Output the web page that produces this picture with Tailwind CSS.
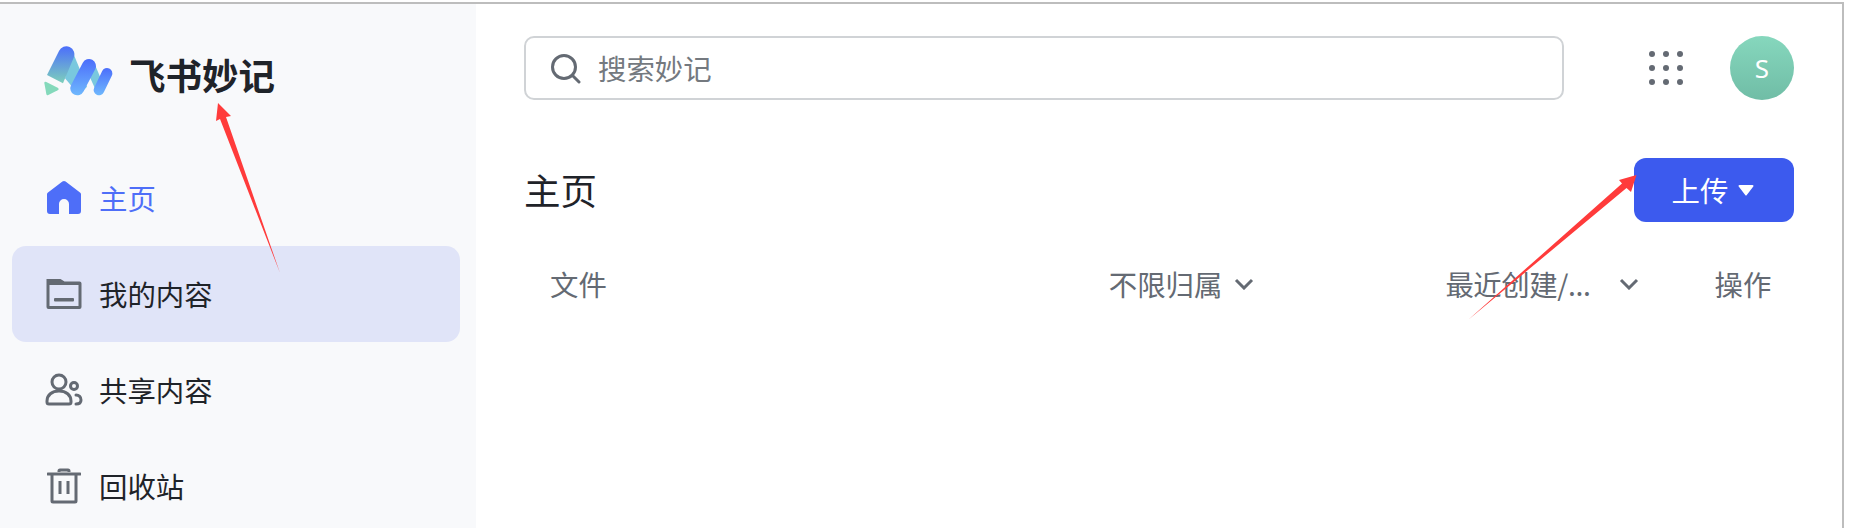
<!DOCTYPE html>
<html lang="zh-CN">
<head>
  <meta charset="UTF-8">
  <title>飞书妙记</title>
  <script src="https://cdn.jsdelivr.net/npm/@tailwindcss/browser@4"></script>
</head>
<body class="bg-white h-[528px] overflow-hidden font-['Noto_Sans_CJK_SC','Noto_Sans',sans-serif]">
  <div class="relative h-[528px] pt-[2px] pr-[11px]">
    <div class="flex h-[526px] border-t-2 border-r-2 border-[#bdbdbd] overflow-hidden">

      <!-- Sidebar -->
      <aside class="w-[476px] shrink-0 bg-[#f8f9fb] pl-3 pr-4">
        <div class="flex items-center h-[146px] pl-[31px]">
          <svg class="w-[74px] h-[54px] mt-[-11px]" viewBox="40 40 222 162" fill="none">
            <defs>
              <linearGradient id="lg1" gradientUnits="userSpaceOnUse" x1="0" y1="45" x2="0" y2="158"><stop offset="0" stop-color="#4c6ffb"/><stop offset="1" stop-color="#7fd3b9"/></linearGradient>
              <linearGradient id="lg2" gradientUnits="userSpaceOnUse" x1="0" y1="85" x2="0" y2="192"><stop offset="0" stop-color="#4c6ffb"/><stop offset="1" stop-color="#6fb9fd"/></linearGradient>
              <linearGradient id="lg3" gradientUnits="userSpaceOnUse" x1="0" y1="110" x2="0" y2="192"><stop offset="0" stop-color="#4c6ffb"/><stop offset="1" stop-color="#6fb9fd"/></linearGradient>
            </defs>
            <path d="M128 58L172 165L148 190L106 140Z" fill="#79c8de"/>
            <path d="M192 90L226 170L205 190L180 135Z" fill="#79c8de"/>
            <path d="M88 58A24 24 0 0 1 132 78L100 155L52 130Z" fill="url(#lg1)"/>
            <line x1="178" y1="103" x2="143" y2="170" stroke="url(#lg2)" stroke-width="42" stroke-linecap="round"/>
            <line x1="232" y1="125" x2="208" y2="175" stroke="url(#lg3)" stroke-width="32" stroke-linecap="round"/>
            <path d="M44 154Q44 149 50 151L84 168Q90 172 84 176L56 190Q51 192 50 187Z" fill="#84d9bb"/>
          </svg>
          <span class="ml-[12px] text-[36.5px] leading-[44px] font-bold text-[#1f2329] mt-[-4px]">飞书妙记</span>
        </div>
        <nav class="flex flex-col">
          <a class="flex items-center h-[96px] pl-[34px] text-[#4e6ef8]">
            <svg class="w-9 h-9 mr-[17px]" viewBox="0 0 36 36" fill="#4e6ef8">
              <path d="M16.4 1.6a2.5 2.5 0 0 1 3.2 0L34 12.6a2 2 0 0 1 1 1.8V31a3 3 0 0 1-3 3h-9V24a5 5 0 0 0-10 0v10H4a3 3 0 0 1-3-3V14.4a2 2 0 0 1 1-1.8Z"/>
            </svg>
            <span class="text-[28.4px] leading-[36px]">主页</span>
          </a>
          <a class="flex items-center h-[96px] pl-[34px] bg-[#e0e4f8] rounded-[14px] text-[#1f2329]">
            <svg class="w-9 h-9 mr-[17px]" viewBox="0 0 36 36" fill="none">
              <path d="M0.500 3h14l4 2.500h15a2 2 0 0 1 2 2V31a2 2 0 0 1-2 2H2.500a2 2 0 0 1-2-2Z" fill="#646a73"/>
              <path d="M3.500 9h29v21h-29Z" fill="#e0e4f8"/>
              <rect x="8" y="22" width="20" height="3.500" rx="1" fill="#646a73"/>
            </svg>
            <span class="text-[28.4px] leading-[36px]">我的内容</span>
          </a>
          <a class="flex items-center h-[96px] pl-[33px] text-[#1f2329]">
            <svg class="w-[38px] h-9 mr-[16px]" viewBox="0 0 38 36" fill="none" stroke="#646a73" stroke-width="3" stroke-linecap="round">
              <circle cx="14" cy="10" r="7"/>
              <path d="M2 29c0-6 5-10 12-10s12 4 12 10v1a2 2 0 0 1-2 2H4a2 2 0 0 1-2-2Z"/>
              <circle cx="29" cy="14" r="3.500"/>
              <path d="M31 23c3 0 5 2 5 5s-2 4-5 4"/>
            </svg>
            <span class="text-[28.4px] leading-[36px]">共享内容</span>
          </a>
          <a class="flex items-center h-[96px] pl-[35px] text-[#1f2329]">
            <svg class="w-[34px] h-9 mr-[18px]" viewBox="0 0 34 36" fill="none" stroke="#646a73" stroke-width="3">
              <path d="M1 6h32" stroke-linecap="round"/>
              <path d="M12 4V3a1 1 0 0 1 1-1h8a1 1 0 0 1 1 1v1" />
              <path d="M5 6v27a1 1 0 0 0 1 1h22a1 1 0 0 0 1-1V6"/>
              <path d="M13 13v13M21 13v13"/>
            </svg>
            <span class="text-[28.4px] leading-[36px]">回收站</span>
          </a>
        </nav>
      </aside>

      <!-- Main -->
      <main class="flex-1 min-w-0 pl-[48px] pr-[48px]">
        <div class="flex items-center h-[64px] mt-[32px]">
          <div class="flex items-center w-[1040px] h-[64px] border-2 border-[#d0d3d6] rounded-[10px] pl-[24px]">
            <svg class="w-[31px] h-[31px] mr-[17px]" viewBox="0 0 31 31" fill="none" stroke="#646a73" stroke-width="3" stroke-linecap="round">
              <circle cx="14" cy="14" r="11.500"/>
              <path d="M23 23l6 6"/>
            </svg>
            <span class="text-[28.4px] leading-[36px] text-[#74797f]">搜索妙记</span>
          </div>
          <div class="ml-auto mr-[47px] grid grid-cols-3 gap-[7.5px]">
            <i class="w-[6.5px] h-[6.5px] rounded-full bg-[#646a73]"></i><i class="w-[6.5px] h-[6.5px] rounded-full bg-[#646a73]"></i><i class="w-[6.5px] h-[6.5px] rounded-full bg-[#646a73]"></i>
            <i class="w-[6.5px] h-[6.5px] rounded-full bg-[#646a73]"></i><i class="w-[6.5px] h-[6.5px] rounded-full bg-[#646a73]"></i><i class="w-[6.5px] h-[6.5px] rounded-full bg-[#646a73]"></i>
            <i class="w-[6.5px] h-[6.5px] rounded-full bg-[#646a73]"></i><i class="w-[6.5px] h-[6.5px] rounded-full bg-[#646a73]"></i><i class="w-[6.5px] h-[6.5px] rounded-full bg-[#646a73]"></i>
          </div>
          <div class="w-16 h-16 rounded-full bg-gradient-to-b from-[#86d7bd] to-[#70bda6] flex items-center justify-center text-white text-[26px] font-['Noto_Sans',sans-serif]">S</div>
        </div>

        <div class="flex items-center justify-between h-[64px] mt-[58px]">
          <h1 class="text-[36.5px] leading-[44px] font-normal text-[#1f2329]">主页</h1>
          <button class="flex items-center justify-center w-[160px] h-[64px] bg-[#3c5aee] rounded-[12px] text-white text-[28.4px] leading-[36px] pr-[2px]">
            上传
            <svg class="w-4 h-3 ml-[10px]" viewBox="0 0 16 12" fill="#fff"><path d="M1.5 1h13a1 1 0 0 1 .8 1.6L8.8 11a1 1 0 0 1-1.6 0L.7 2.6A1 1 0 0 1 1.5 1Z"/></svg>
          </button>
        </div>

        <div class="flex items-center h-[56px] mt-[34px] text-[28.4px] leading-[36px] text-[#646a73]">
          <span class="ml-[26px]">文件</span>
          <span class="ml-[502px]">不限归属</span>
          <svg class="w-5 h-3 ml-[12px]" viewBox="0 0 20 12" fill="none" stroke="#646a73" stroke-width="3"><path d="M2 2l8 8 8-8"/></svg>
          <span class="ml-[191px] tracking-[-0.4px]">最近创建/...</span>
          <svg class="w-5 h-3 ml-[28px]" viewBox="0 0 20 12" fill="none" stroke="#646a73" stroke-width="3"><path d="M2 2l8 8 8-8"/></svg>
          <span class="ml-[76px]">操作</span>
        </div>
      </main>
    </div>

    <!-- Red annotation arrows drawn on the screenshot -->
    <svg class="absolute inset-0 w-[1855px] h-[528px] pointer-events-none" viewBox="0 0 1855 528" fill="#ff3b3b">
      <path d="M218 103L231 116L226 117L280 273L220 119L216 121Z"/>
      <path d="M1636.500 175L1631 192L1626.500 188L1468 320L1622 183.500L1619 180Z"/>
    </svg>
  </div>
</body>
</html>
